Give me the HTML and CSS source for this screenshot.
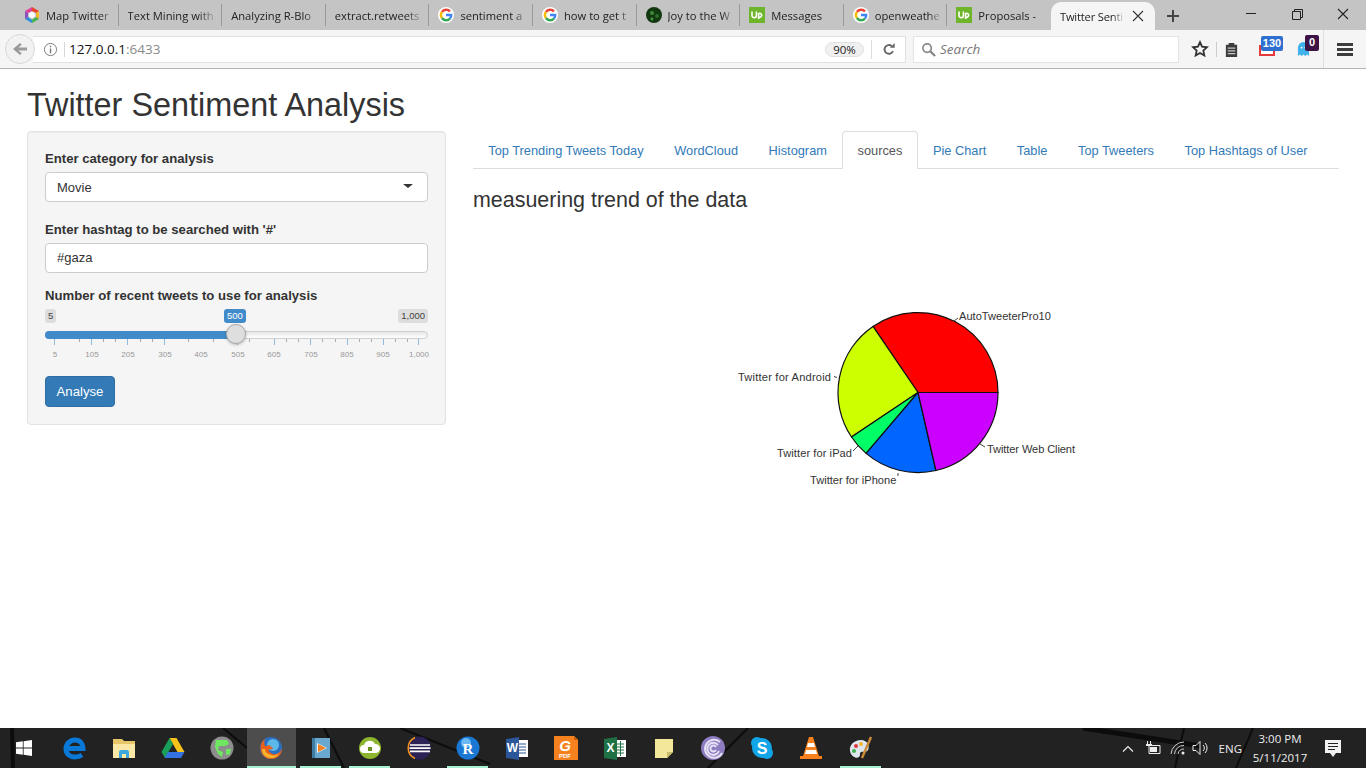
FILE: index.html
```html
<!DOCTYPE html>
<html lang="en">
<head>
    <meta charset="utf-8">
    <title>Twitter Sentiment Analysis</title>
    <link rel="stylesheet" href="styles.css">
</head>
<body>
    <!-- tab strip -->
    <header class="tabstrip">
        <div class="tab">
            <svg class="favicon" viewBox="0 0 16 16"><path fill="#e8442e" d="M8 0l7 4-3 2-4-2z"/><path fill="#f7b52c" d="M15 4v8l-3-2V6z"/><path fill="#3fb34f" d="M15 12l-7 4v-3l4-3z"/><path fill="#2b8fd8" d="M8 16l-7-4 3-2 4 3z"/><path fill="#8b4fc0" d="M1 12V4l3 2v4z"/><path fill="#e0409a" d="M1 4l7-4v4L4 6z"/><circle cx="8" cy="8" r="3" fill="#fff"/></svg>
            <span class="tab-title">Map Twitter</span>
        </div>
        <div class="tab"><span class="tab-title">Text Mining with</span></div>
        <div class="tab"><span class="tab-title">Analyzing R-Blo</span></div>
        <div class="tab"><span class="tab-title">extract.retweets</span></div>
        <div class="tab">
            <svg class="favicon" viewBox="0 0 16 16"><circle cx="8" cy="8" r="8" fill="#fff"/><path fill="none" stroke="#ea4335" stroke-width="2.4" d="M12 4.4A5.2 5.2 0 0 0 3.9 5"/><path fill="none" stroke="#fbbc05" stroke-width="2.4" d="M3.9 5a5.2 5.2 0 0 0 0 6"/><path fill="none" stroke="#34a853" stroke-width="2.4" d="M3.9 11a5.2 5.2 0 0 0 8.1.6"/><path fill="none" stroke="#4285f4" stroke-width="2.4" d="M12 11.6A5.2 5.2 0 0 0 13.2 8H8"/></svg>
            <span class="tab-title">sentiment a</span>
        </div>
        <div class="tab">
            <svg class="favicon" viewBox="0 0 16 16"><circle cx="8" cy="8" r="8" fill="#fff"/><path fill="none" stroke="#ea4335" stroke-width="2.4" d="M12 4.4A5.2 5.2 0 0 0 3.9 5"/><path fill="none" stroke="#fbbc05" stroke-width="2.4" d="M3.9 5a5.2 5.2 0 0 0 0 6"/><path fill="none" stroke="#34a853" stroke-width="2.4" d="M3.9 11a5.2 5.2 0 0 0 8.1.6"/><path fill="none" stroke="#4285f4" stroke-width="2.4" d="M12 11.6A5.2 5.2 0 0 0 13.2 8H8"/></svg>
            <span class="tab-title">how to get t</span>
        </div>
        <div class="tab">
            <svg class="favicon" viewBox="0 0 16 16"><circle cx="8" cy="8" r="8" fill="#12380f"/><circle cx="6" cy="6" r="2" fill="#3f8a3a"/><circle cx="11" cy="9" r="2" fill="#2c6e2a"/><circle cx="6" cy="12" r="1.4" fill="#4a9a44"/></svg>
            <span class="tab-title">Joy to the W</span>
        </div>
        <div class="tab">
            <svg class="favicon" viewBox="0 0 16 16"><rect width="16" height="16" fill="#6fb52c"/><path fill="none" stroke="#fff" stroke-width="1.6" d="M3 4.5v4a2.2 2.2 0 0 0 4.4 0v-4M9.6 12V6.6a2 2 0 1 1 0 3.4"/></svg>
            <span class="tab-title">Messages</span>
        </div>
        <div class="tab">
            <svg class="favicon" viewBox="0 0 16 16"><circle cx="8" cy="8" r="8" fill="#fff"/><path fill="none" stroke="#ea4335" stroke-width="2.4" d="M12 4.4A5.2 5.2 0 0 0 3.9 5"/><path fill="none" stroke="#fbbc05" stroke-width="2.4" d="M3.9 5a5.2 5.2 0 0 0 0 6"/><path fill="none" stroke="#34a853" stroke-width="2.4" d="M3.9 11a5.2 5.2 0 0 0 8.1.6"/><path fill="none" stroke="#4285f4" stroke-width="2.4" d="M12 11.6A5.2 5.2 0 0 0 13.2 8H8"/></svg>
            <span class="tab-title">openweathe</span>
        </div>
        <div class="tab no-line">
            <svg class="favicon" viewBox="0 0 16 16"><rect width="16" height="16" fill="#6fb52c"/><path fill="none" stroke="#fff" stroke-width="1.6" d="M3 4.5v4a2.2 2.2 0 0 0 4.4 0v-4M9.6 12V6.6a2 2 0 1 1 0 3.4"/></svg>
            <span class="tab-title">Proposals -</span>
        </div>
        <div class="tab active-tab">
            <span class="tab-title">Twitter Senti</span>
            <svg class="tab-close" viewBox="0 0 12 12"><path stroke="#333" stroke-width="1.1" d="M1 1l10 10M11 1L1 11"/></svg>
        </div>
        <svg class="new-tab" viewBox="0 0 14 14"><path stroke="#444" stroke-width="2" d="M7 1v12M1 7h12"/></svg>
        <div class="window-btns">
            <svg viewBox="0 0 46 30"><path stroke="#222" d="M18 13.5h10"/></svg>
            <svg viewBox="0 0 46 30"><path fill="none" stroke="#222" d="M18.500 11.500h8v8h-8zM20.500 11.500v-2h8v8h-2"/></svg>
            <svg viewBox="0 0 46 30"><path stroke="#222" stroke-width="1.1" d="M18 9l10 10M28 9L18 19"/></svg>
        </div>
    </header>

    <!-- toolbar -->
    <nav class="toolbar">
        <div class="back-btn">
            <svg viewBox="0 0 16 16" width="16" height="16"><path fill="#9a9a9a" d="M8 2l1.800 1.800L6.400 6.600H15v2.800H6.400l3.400 2.800L8 14 1 8z"/></svg>
        </div>
        <div class="urlbar">
            <svg class="info-icon" viewBox="0 0 16 16"><circle cx="8" cy="8" r="6.500" fill="none" stroke="#777"/><path stroke="#777" stroke-width="1.500" d="M8 7v5M8 4v1.500"/></svg>
            <span class="url"><span class="url-host">127.0.0.1</span>:6433</span>
            <span class="zoom-pill">90%</span>
            <span class="reload">
                <svg viewBox="0 0 16 16" width="14" height="14"><path fill="none" stroke="#666" stroke-width="2.200" d="M12.500 10.500A5 5 0 1 1 11 4.500"/><path fill="#666" d="M9 6.500h5.500V1z"/></svg>
            </span>
        </div>
        <div class="searchbar">
            <svg viewBox="0 0 16 16" width="15" height="15"><circle cx="6.500" cy="6.500" r="4.500" fill="none" stroke="#888" stroke-width="1.800"/><path stroke="#888" stroke-width="2.400" d="M10 10l5 5"/></svg>
            <span>Search</span>
        </div>
        <div class="addons">
            <svg class="addon-star" viewBox="0 0 20 20"><path fill="none" stroke="#333" stroke-width="2" d="M10 2.500l2.300 5 5.400.6-4 3.700 1.100 5.400L10 14.500l-4.800 2.700 1.100-5.400-4-3.700 5.400-.6z"/></svg>
            <svg class="addon-list" viewBox="0 0 16 16"><path fill="#3c3c3c" d="M2 3h3V1h6v2h3v13H2z"/><path stroke="#f5f5f5" d="M4 6.500h8M4 9.500h8M4 12.500h8"/></svg>
            <div class="addon-mail">
                <svg viewBox="0 0 16 11"><path fill="#fff" stroke="#e2393c" stroke-width="2" d="M1 1h14v9H1z"/></svg>
                <span class="badge badge-blue">130</span>
            </div>
            <div class="addon-ghost">
                <svg viewBox="0 0 14 15"><path fill="#3fb2ec" d="M1 15V6a6 6 0 0 1 12 0v9l-2-1.500L9 15l-2-1.500L5 15l-2-1.500z"/><circle cx="5" cy="6" r="1" fill="#fff"/><circle cx="9" cy="6" r="1" fill="#fff"/></svg>
                <span class="badge badge-dark">0</span>
            </div>
            <div class="menu-btn">
                <svg viewBox="0 0 16 13" width="16" height="13"><path stroke="#3c3c3c" stroke-width="3" d="M0 1.500h16M0 6.500h16M0 11.500h16"/></svg>
            </div>
        </div>
    </nav>

    <!-- shiny app -->
    <main class="page">
        <h1 class="app-title">Twitter Sentiment Analysis</h1>
        <div class="app-row">
            <aside class="well">
                <div class="form-group">
                    <label class="ctl-label">Enter category for analysis</label>
                    <div class="select-box">Movie<span class="caret"></span></div>
                </div>
                <div class="form-group hashtag-group">
                    <label class="ctl-label">Enter hashtag to be searched with '#'</label>
                    <input class="text-box" type="text" value="#gaza">
                </div>
                <div class="form-group slider-group">
                    <label class="ctl-label">Number of recent tweets to use for analysis</label>
                    <div class="slider">
                        <div class="slider-ends">
                            <span class="chip">5</span>
                            <span class="chip">1,000</span>
                        </div>
                        <span class="chip chip-value">500</span>
                        <div class="track"><div class="track-fill"></div></div>
                        <span class="handle"></span>
                        <svg class="grid" viewBox="45 339 383 22" width="383" height="22">
                            <g stroke="#8fbbe0">
                                <path d="M54.500 339v6M91.500 339v6M127.500 339v6M164.500 339v6M237.500 339v6M274.500 339v6M310.500 339v6M347.500 339v6M383.500 339v6M418.500 339v6"/>
                            </g>
                            <g stroke="#aaa">
                                <path d="M79.500 339v3M103.500 339v3M115.500 339v3M140.500 339v3M152.500 339v3M188.500 339v3M213.500 339v3M249.500 339v3M286.500 339v3M298.500 339v3M322.500 339v3M335.500 339v3M359.500 339v3M371.500 339v3M395.500 339v3M407.500 339v3"/>
                            </g>
                            <g class="grid-text" text-anchor="middle">
                                <text x="55" y="357">5</text>
                                <text x="92" y="357">105</text>
                                <text x="128" y="357">205</text>
                                <text x="165" y="357">305</text>
                                <text x="201" y="357">405</text>
                                <text x="238" y="357">505</text>
                                <text x="274" y="357">605</text>
                                <text x="311" y="357">705</text>
                                <text x="347" y="357">805</text>
                                <text x="383" y="357">905</text>
                                <text x="419" y="357">1,000</text>
                            </g>
                        </svg>
                    </div>
                </div>
                <button class="btn-analyse" type="button">Analyse</button>
            </aside>
            <section class="main-panel">
                <ul class="nav-tabs">
                    <li><a>Top Trending Tweets Today</a></li>
                    <li><a>WordCloud</a></li>
                    <li><a>Histogram</a></li>
                    <li class="active"><a>sources</a></li>
                    <li><a>Pie Chart</a></li>
                    <li><a>Table</a></li>
                    <li><a>Top Tweeters</a></li>
                    <li><a>Top Hashtags of User</a></li>
                </ul>
                <h3 class="panel-title">measuering trend of the data</h3>
                <svg class="pie" viewBox="473 225 866 290" width="866" height="290">
                    <g stroke="#111" stroke-width="1.200">
                        <path fill="#ff0000" d="M918 392.500H998A80 80 0 0 0 873 326.400Z"/>
                        <path fill="#ccff00" d="M918 392.500L873 326.400A80 80 0 0 0 851.500 437Z"/>
                        <path fill="#00ff66" d="M918 392.500L851.500 437A80 80 0 0 0 866.100 453.400Z"/>
                        <path fill="#0066ff" d="M918 392.500L866.100 453.400A80 80 0 0 0 935.900 470.500Z"/>
                        <path fill="#cc00ff" d="M918 392.500L935.900 470.500A80 80 0 0 0 998 392.500Z"/>
                    </g>
                    <path fill="none" stroke="#444" d="M954 321l4-3M834 376.500l3 1M853 451l5-5M898 473v3M980 444l5 3"/>
                    <g class="pie-text">
                        <text x="959" y="320">AutoTweeterPro10</text>
                        <text x="738" y="381" textLength="93">Twitter for Android</text>
                        <text x="777" y="457" textLength="75">Twitter for iPad</text>
                        <text x="810" y="484">Twitter for iPhone</text>
                        <text x="987" y="453" textLength="88">Twitter Web Client</text>
                    </g>
                </svg>
            </section>
        </div>
    </main>

    <!-- windows taskbar -->
    <footer class="taskbar">
        <svg class="streaks" viewBox="0 0 1366 40" preserveAspectRatio="none">
            <g stroke="#0c0c0c" fill="none">
                <path stroke-width="4" d="M12 0l1 40"/>
                <path stroke-width="2" d="M223 0l24 20M324 0l20 40M400 0l90 36M748 0l-40 40"/>
                <path stroke-width="5" d="M1083 0l118 18"/>
                <path stroke-width="2" d="M1184 0l-9 40M1253 0l-17 40"/>
            </g>
        </svg>
        <div class="start-btn">
            <svg viewBox="0 0 16 16" width="16" height="16"><path fill="#fff" d="M0 2.300l6.800-1V7.500H0zM7.600 1.200L16 0v7.500H7.600zM0 8.400h6.800v6.300l-6.800-1zM7.600 8.400H16V16l-8.400-1.200z"/></svg>
        </div>
        <div class="task-item">
            <svg viewBox="0 0 24 24"><path fill="none" stroke="#0a78d6" stroke-width="5" d="M4 12.500h16c0-5-3-8.500-8-8.500s-9 4-9 9 4 8 9 8c3 0 5-.7 7-2"/></svg>
        </div>
        <div class="task-item">
            <svg viewBox="0 0 24 24"><path fill="#e7c66a" d="M1 3h9l2 2h11v17H1z"/><path fill="#fbe8a6" d="M1 8h22v14H1z"/><path fill="#3ba9e0" d="M7 22v-6a2 2 0 0 1 2-2h6a2 2 0 0 1 2 2v6h-3v-4h-4v4z"/></svg>
        </div>
        <div class="task-item">
            <svg viewBox="0 0 24 24"><path fill="#f7c21a" d="M8.500 2h7l8 14h-7z"/><path fill="#1a9f5b" d="M8.500 2l3.500 6-8 14-3.500-6z"/><path fill="#3372e0" d="M7 16h16.500L20 22H3.500z"/></svg>
        </div>
        <div class="task-item">
            <svg viewBox="0 0 24 24"><circle cx="12" cy="12" r="11.500" fill="#8d8d8d"/><path fill="#6ee85e" d="M6 4h11l2 4-4 2H9l-1 4 5 2-1 5-4-3-3-7zM16 13h5l-1 5-4 1z"/></svg>
        </div>
        <div class="task-item task-active open-full">
            <svg viewBox="0 0 24 24"><circle cx="12" cy="12" r="11" fill="#2a6fc0"/><circle cx="14" cy="9" r="6" fill="#5cb8e8"/><path fill="#e8601c" d="M2 8c-2 7 2 15 10 15s11-6 11-11c-1 4-5 7-9 6-3-1-5-3-4-5 2 1 4 0 4-1-2-1-3-2-3-3-3 1-4 1-5 1C5 8 5 5 6 3 4 4 3 6 2 8z"/><path fill="#f7b52c" d="M3 13c0 6 4 9 9 9 4 0 7-2 8-5-2 2-5 3-8 2-4-1-6-3-6-6z"/></svg>
        </div>
        <div class="task-item open">
            <svg viewBox="0 0 24 24"><path fill="#6aa9cf" d="M3 2h18v20H3z"/><path fill="#3e7ca3" d="M3 2h3v20H3z"/><path fill="#fff" d="M8 7l10 5-10 5z" opacity=".9"/><path fill="#f5821f" d="M9 8l8 4-8 4z"/></svg>
        </div>
        <div class="task-item open">
            <svg viewBox="0 0 24 24"><circle cx="12" cy="12" r="11" fill="#8eb52e"/><path fill="#fff" d="M6 17a4 4 0 0 1 0-8 6 6 0 0 1 11-1 4.500 4.500 0 0 1 1 9z"/><path fill="#6b8f1d" d="M10 11h4v4h-4z"/></svg>
        </div>
        <div class="task-item">
            <svg viewBox="0 0 24 24"><circle cx="12.500" cy="12" r="11.500" fill="#2c2255"/><path fill="none" stroke="#f7941e" stroke-width="1.500" d="M8 1.500a11.500 11.500 0 0 0 0 21"/><path stroke="#fff" stroke-width="1.700" d="M3 9h20M2.500 12.200h21M3 15.400h20"/></svg>
        </div>
        <div class="task-item open">
            <svg viewBox="0 0 24 24"><circle cx="12" cy="12" r="11.500" fill="#1a78d4"/><circle cx="10" cy="7" r="5" fill="#6ab9f5"/><text class="icon-r" x="12" y="18" text-anchor="middle">R</text></svg>
        </div>
        <div class="task-item">
            <svg viewBox="0 0 24 24"><path fill="#fff" d="M10 4h13v17H10z"/><path stroke="#2b5797" d="M14 8h7M14 11h7M14 14h7M14 17h7"/><path fill="#2b579a" d="M1 3l13-2v23L1 22z"/><text class="icon-letter" x="7.500" y="16" text-anchor="middle">W</text></svg>
        </div>
        <div class="task-item">
            <svg viewBox="0 0 24 24"><path fill="#f5821f" d="M0 0h20l4 4v20H0z"/><path fill="#c85f0a" d="M20 0l4 4h-4z"/><text class="icon-g" x="11" y="15" text-anchor="middle">G</text><text class="icon-pdf" x="11" y="22" text-anchor="middle">PDF</text></svg>
        </div>
        <div class="task-item">
            <svg viewBox="0 0 24 24"><path fill="#fff" d="M10 4h13v17H10z"/><path stroke="#217346" d="M14 8h7M14 11h7M14 14h7M14 17h7M17.500 5v15"/><path fill="#1e7145" d="M1 3l13-2v23L1 22z"/><text class="icon-letter" x="7.500" y="16" text-anchor="middle">X</text></svg>
        </div>
        <div class="task-item">
            <svg viewBox="0 0 24 24"><path fill="#f3e89a" d="M3 3h18v13l-6 6H3z"/><path fill="#c9bd6c" d="M21 16l-6 6v-6z"/></svg>
        </div>
        <div class="task-item">
            <svg viewBox="0 0 24 24"><circle cx="12" cy="12" r="12" fill="#8d7cc0"/><path fill="none" stroke="#e6e0f5" stroke-width="2" d="M19 6a9 9 0 1 0 2 11M17 9a6 6 0 1 0 1 6M15 11a3 3 0 1 0 0 3"/></svg>
        </div>
        <div class="task-item">
            <svg viewBox="0 0 24 24"><circle cx="7" cy="7" r="6" fill="#12a5e8"/><circle cx="17" cy="17" r="6" fill="#12a5e8"/><circle cx="12" cy="12" r="10" fill="#12a5e8"/><text class="icon-s" x="12" y="17.500" text-anchor="middle">S</text></svg>
        </div>
        <div class="task-item">
            <svg viewBox="0 0 24 24"><path fill="#f5821f" d="M10 1h4l6 19h3v3H1v-3h3z"/><path fill="#fff" d="M9 7h6l1 4H8zM7 14h10l1 4H6z"/></svg>
        </div>
        <div class="task-item open">
            <svg viewBox="0 0 24 24"><path fill="#dfe6ee" d="M12 4C5 4 0 9 1 15s7 8 9 6 0-4 2-5 5 1 7-2 0-10-7-10z"/><circle cx="7" cy="10" r="2" fill="#e2393c"/><circle cx="12" cy="8" r="2" fill="#f7b52c"/><circle cx="5" cy="15" r="2" fill="#3fb34f"/><path stroke="#c98a3a" stroke-width="2.500" d="M22 1L13 22"/></svg>
        </div>
        <div class="tray">
            <svg class="tray-chevron" viewBox="0 0 12 7" width="12" height="7"><path fill="none" stroke="#eee" stroke-width="1.200" d="M1 6.500l5-5 5 5"/></svg>
            <svg class="tray-battery" viewBox="0 0 16 14" width="16" height="14"><path fill="none" stroke="#eee" d="M4 4.500h11v8H4z"/><path fill="#eee" d="M5 6h7v5H5zM2 0h1v3H2zM5 0h1v3H5zM1 3h6v2H1z"/></svg>
            <svg class="tray-wifi" viewBox="0 0 16 14" width="16" height="14"><path fill="none" stroke="#ccc" d="M1 13A13 13 0 0 1 14 1M4.500 13A9 9 0 0 1 14 4.500M8 13a6 6 0 0 1 6-5"/><circle cx="13" cy="12" r="1.500" fill="#eee"/></svg>
            <svg class="tray-volume" viewBox="0 0 18 16" width="18" height="16"><path fill="none" stroke="#eee" d="M1 5.500h3l4-4v13l-4-4H1zM11 5a4 4 0 0 1 0 6M13 3a7 7 0 0 1 0 10"/></svg>
            <span class="tray-lang">ENG</span>
            <div class="tray-clock"><span>3:00 PM</span><span>5/11/2017</span></div>
            <svg class="tray-note" viewBox="0 0 16 17" width="16" height="17"><path fill="#f2f2f2" d="M0 0h16v13h-5l-3 4-3-4H0z"/><path stroke="#222" d="M3 3.500h10M3 6.500h10M3 9.500h7"/></svg>
        </div>
    </footer>
</body>
</html>
```

FILE: styles.css
```css
html, body {
    margin: 0;
    height: 100%;
}
body {
    display: flex;
    flex-direction: column;
    height: 768px;
    overflow: hidden;
    background: #fff;
    font-family: "Liberation Sans", Arial, sans-serif;
    color: #333;
}

/* browser tabs */
.tabstrip {
    display: flex;
    align-items: stretch;
    height: 30px;
    padding-left: 15px;
    background: #c4c4c4;
    font-family: "Open Sans", sans-serif;
    font-size: 11.200px;
    color: #222;
}
.tab {
    display: flex;
    align-items: center;
    box-sizing: border-box;
    width: 103.6px;
    height: 22px;
    margin-top: 4px;
    padding-left: 9px;
    padding-right: 4px;
    border-right: 1px solid #9a9a9a;
    overflow: hidden;
}
.tab.no-line {
    border-right: none;
}
.favicon {
    flex: none;
    width: 16px;
    height: 16px;
    margin-right: 6px;
}
.tab-title {
    flex: 1;
    white-space: nowrap;
    overflow: hidden;
    -webkit-mask-image: linear-gradient(to right, #000 80%, transparent);
    mask-image: linear-gradient(to right, #000 80%, transparent);
}
.active-tab {
    height: 28px;
    margin-top: 2px;
    padding-right: 11px;
    background: #f5f5f5;
    border-right: none;
    border-radius: 10px 10px 0 0;
}
.active-tab .tab-title {
    letter-spacing: -.2px;
}
.tab-close {
    flex: none;
    width: 12px;
    height: 12px;
    margin-left: 7px;
}
.new-tab {
    width: 14px;
    height: 14px;
    margin: 9px 0 0 11px;
}
.window-btns {
    display: flex;
    margin-left: auto;
}
.window-btns svg {
    width: 46px;
    height: 30px;
}

/* browser toolbar */
.toolbar {
    display: flex;
    align-items: center;
    box-sizing: border-box;
    height: 39px;
    padding-left: 5px;
    background: #f5f5f5;
    border-bottom: 1px solid #b4b4b4;
    font-family: "Open Sans", sans-serif;
}
.back-btn {
    display: flex;
    align-items: center;
    justify-content: center;
    flex: none;
    box-sizing: border-box;
    width: 30px;
    height: 30px;
    border: 1px solid #d8d8d8;
    border-radius: 50%;
    background: #f2f2f2;
    position: relative;
    z-index: 1;
}
.urlbar {
    display: flex;
    align-items: center;
    box-sizing: border-box;
    width: 873px;
    height: 27px;
    margin-left: -2px;
    background: #fff;
    border: 1px solid #e0e0e0;
    border-left: none;
    font-size: 14px;
}
.info-icon {
    flex: none;
    width: 15px;
    height: 15px;
    margin-left: 10px;
    padding-right: 6px;
    border-right: 1px solid #d6d6d6;
}
.url {
    flex: 1;
    padding-left: 4px;
    color: #8a8a8a;
    font-size: 13.500px;
}
.url-host {
    color: #111;
}
.zoom-pill {
    box-sizing: border-box;
    width: 39px;
    height: 15px;
    margin: 1px 7px 0 0;
    border: 1px solid #e0e0e0;
    border-radius: 8px;
    background: #f0f0f0;
    font-size: 11.500px;
    line-height: 13px;
    text-align: center;
    color: #222;
}
.reload {
    display: flex;
    align-items: center;
    justify-content: center;
    width: 33px;
    height: 19px;
    border-left: 1px solid #ddd;
}
.searchbar {
    display: flex;
    align-items: center;
    box-sizing: border-box;
    width: 266px;
    height: 27px;
    margin-left: 7px;
    padding-left: 7px;
    gap: 4px;
    background: #fff;
    border: 1px solid #e4e4e4;
    font-size: 13.500px;
    font-style: italic;
    color: #777;
}
.addons {
    display: flex;
    align-items: center;
    flex: 1;
    height: 100%;
    position: relative;
}
.addon-star {
    width: 18px;
    height: 18px;
    margin-left: 12px;
}
.addon-list {
    width: 15px;
    height: 15px;
    margin-left: 7px;
    padding-left: 7px;
    border-left: 1px solid #ccc;
}
.addon-mail {
    position: relative;
    width: 16px;
    height: 11px;
    margin: 2px 0 0 20px;
}
.addon-mail svg, .addon-ghost svg {
    display: block;
    width: 100%;
    height: 100%;
}
.addon-ghost {
    position: relative;
    width: 13px;
    height: 14px;
    margin: 0 0 0 22px;
}
.badge {
    position: absolute;
    font: bold 11px/15px "Liberation Sans", sans-serif;
    color: #fff;
    text-align: center;
    border-radius: 2px;
}
.badge-blue {
    left: 2px;
    top: -9px;
    width: 22px;
    height: 15px;
    background: #2f6fd0;
}
.badge-dark {
    left: 8px;
    top: -7px;
    width: 14px;
    height: 16px;
    background: #3d1245;
}
.menu-btn {
    display: flex;
    align-items: center;
    height: 100%;
    margin-left: 13px;
    padding-left: 13px;
    border-left: 1px solid #ddd;
}

/* shiny page */
.page {
    flex: 1;
    padding: 0 27px;
}
.app-title {
    margin: 18px 0 7px;
    font-size: 32.400px;
    font-weight: 400;
    line-height: 37px;
    color: #333;
}
.app-row {
    display: flex;
    align-items: flex-start;
    gap: 27px;
}
.well {
    box-sizing: border-box;
    flex: none;
    width: 419px;
    height: 294px;
    padding: 18px 17px 17px;
    background: #f5f5f5;
    border: 1px solid #e3e3e3;
    border-radius: 4px;
    box-shadow: inset 0 1px 1px rgba(0, 0, 0, .05);
}
.form-group {
    margin-bottom: 19px;
}
.ctl-label {
    display: block;
    margin-bottom: 4px;
    font-size: 13.150px;
    font-weight: 700;
    line-height: 18px;
}
.select-box, .text-box {
    display: block;
    box-sizing: border-box;
    width: 383px;
    height: 30px;
    padding: 0 11px;
    background: #fff;
    border: 1px solid #ccc;
    border-radius: 4px;
    font: 13px/30px "Liberation Sans", sans-serif;
    color: #333;
    position: relative;
}
.text-box {
    margin-top: 4px;
}
.hashtag-group {
    margin-bottom: 14px;
}
.caret {
    position: absolute;
    right: 14px;
    top: 11px;
    border-top: 4px solid #333;
    border-left: 5px solid transparent;
    border-right: 5px solid transparent;
}
.slider-group {
    margin-bottom: 9px;
}
.slider {
    position: relative;
    width: 383px;
    height: 58px;
    margin-top: 4px;
}
.slider-ends {
    display: flex;
    justify-content: space-between;
    height: 22px;
}
.chip {
    height: 14px;
    padding: 0 3px;
    background: #ddd;
    border-radius: 3px;
    font-size: 9.500px;
    line-height: 14px;
    color: #444;
}
.chip-value {
    position: absolute;
    left: 179px;
    top: 0;
    background: #428bca;
    color: #fff;
}
.track {
    height: 6px;
    border: 1px solid #cfcfcf;
    border-radius: 4px;
    background: linear-gradient(#e6e6e6, #fff);
}
.track-fill {
    width: 191px;
    height: 8px;
    margin: -1px;
    border-radius: 4px 0 0 4px;
    background: #428bca;
}
.handle {
    position: absolute;
    left: 181px;
    top: 15px;
    box-sizing: border-box;
    width: 20px;
    height: 20px;
    background: #dedede;
    border: 1px solid #aaa;
    border-radius: 50%;
    box-shadow: 0 1px 3px rgba(0, 0, 0, .25);
}
.grid {
    display: block;
    overflow: visible;
}
.grid-text {
    font-size: 8px;
    fill: #999;
}
.btn-analyse {
    display: block;
    width: 70px;
    height: 31px;
    padding: 0;
    background: #337ab7;
    border: 1px solid #2e6da4;
    border-radius: 4px;
    font: 13.200px "Liberation Sans", sans-serif;
    color: #fff;
}
.main-panel {
    flex: none;
    width: 866px;
}
.nav-tabs {
    display: flex;
    height: 38px;
    margin: 0;
    padding: 0;
    list-style: none;
    border-bottom: 1px solid #ddd;
    font-size: 12.800px;
    box-sizing: border-box;
    white-space: nowrap;
}
.nav-tabs li {
    padding: 0 14.300px;
    line-height: 37px;
    color: #337ab7;
    border: 1px solid transparent;
    border-bottom: none;
    height: 38px;
    box-sizing: border-box;
}
.nav-tabs li.active {
    color: #555;
    background: #fff;
    border-color: #ddd;
    border-radius: 4px 4px 0 0;
}
.panel-title {
    margin: 19px 0 0;
    font-size: 21.450px;
    font-weight: 400;
    line-height: 24px;
}
.pie {
    display: block;
    margin-top: 13px;
}
.pie-text {
    font-size: 11.100px;
    fill: #333;
}

/* windows taskbar */
.taskbar {
    position: relative;
    display: flex;
    align-items: stretch;
    flex: none;
    height: 40px;
    background: #222;
    font-family: "Open Sans", sans-serif;
    color: #eee;
}
.streaks {
    position: absolute;
    left: 0;
    top: 0;
    width: 100%;
    height: 100%;
}
.start-btn {
    position: relative;
    display: flex;
    align-items: center;
    justify-content: center;
    width: 48px;
    margin-right: 2.500px;
}
.task-item {
    position: relative;
    display: flex;
    align-items: center;
    justify-content: center;
    flex: none;
    width: 49.100px;
}
.task-item svg {
    width: 24px;
    height: 24px;
}
.task-active {
    background: #4d4d4d;
}
.task-item.open::after, .task-item.open-full::after {
    content: "";
    position: absolute;
    left: 4px;
    right: 4px;
    bottom: 0;
    height: 2px;
    background: #a8f0d2;
}
.task-item.open-full::after {
    left: 0;
    right: 0;
}
.icon-r {
    font: bold 15px "Liberation Serif", serif;
    fill: #fff;
}
.icon-letter {
    font: bold 12px "Liberation Sans", sans-serif;
    fill: #fff;
}
.icon-g {
    font: italic bold 15px "Liberation Sans", sans-serif;
    fill: #fff;
}
.icon-pdf {
    font: bold 6px "Liberation Sans", sans-serif;
    fill: #fff;
}
.icon-s {
    font: bold 16px "Liberation Sans", sans-serif;
    fill: #fff;
}
.tray {
    position: relative;
    display: flex;
    align-items: center;
    margin-left: auto;
    padding-right: 25px;
    font-size: 11.500px;
}
.tray-battery {
    margin-left: 11px;
}
.tray-wifi {
    margin-left: 9px;
}
.tray-volume {
    margin-left: 6px;
}
.tray-lang {
    margin-left: 9px;
}
.tray-clock {
    display: flex;
    flex-direction: column;
    align-items: center;
    width: 60px;
    margin-left: 8px;
    line-height: 19px;
}
.tray-note {
    margin-left: 15px;
}
```
